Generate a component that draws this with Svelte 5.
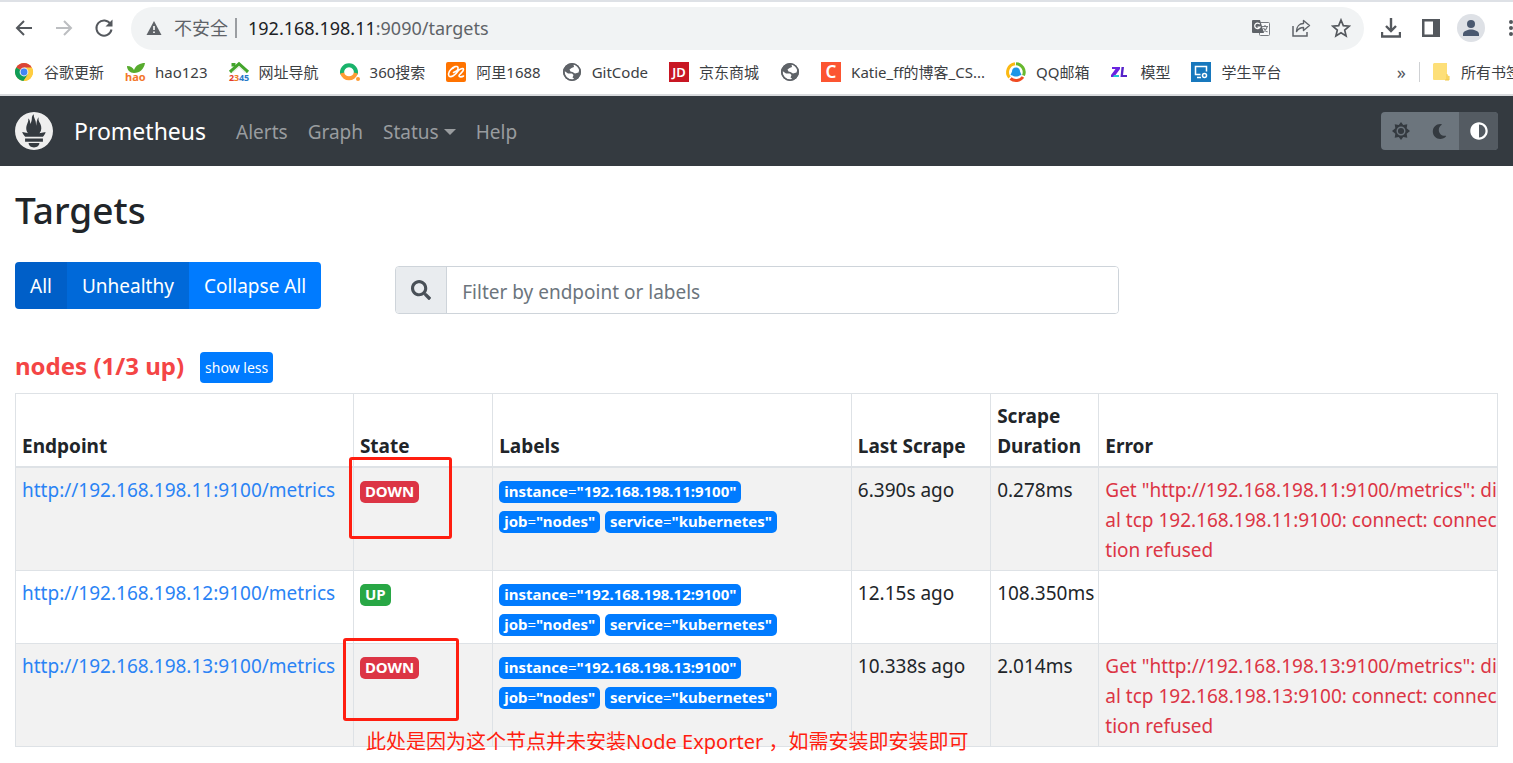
<script>
  const bookmarks = [
    { icon: 'chrome', text: '谷歌更新' },
    { icon: 'hao', text: 'hao123' },
    { icon: 'house', text: '网址导航' },
    { icon: 'ring', text: '360搜索' },
    { icon: 'ali', text: '阿里1688' },
    { icon: 'globe', text: 'GitCode' },
    { icon: 'jd', text: '京东商城' },
    { icon: 'globe', text: '' },
    { icon: 'csdn', text: 'Katie_ff的博客_CS...' },
    { icon: 'qq', text: 'QQ邮箱' },
    { icon: 'zl', text: '模型' },
    { icon: 'screen', text: '学生平台' }
  ];

  const targets = [
    { host: '192.168.198.11:9100', state: 'DOWN', last: '6.390s ago', duration: '0.278ms' },
    { host: '192.168.198.12:9100', state: 'UP', last: '12.15s ago', duration: '108.350ms' },
    { host: '192.168.198.13:9100', state: 'DOWN', last: '10.338s ago', duration: '2.014ms' }
  ].map((t) => ({
    ...t,
    url: `http://${t.host}/metrics`,
    labels: [['instance', t.host], ['job', 'nodes'], ['service', 'kubernetes']],
    error: t.state === 'DOWN' ? `Get "http://${t.host}/metrics": dial tcp ${t.host}: connect: connection refused` : ''
  }));

  let filter = $state('');
</script>

{#snippet favicon(name)}
  <svg class="fav" viewBox="0 0 20 20" aria-hidden="true">
    {#if name === 'chrome'}
      <circle cx="10" cy="10" r="9" fill="#fbc02d" />
      <path d="M10 10 2.2 5.5A9 9 0 0 1 17.8 5.5z" fill="#db4437" />
      <path d="M10 10 2.2 5.5A9 9 0 0 0 9.5 19L14 12z" fill="#0f9d58" />
      <path d="M17.8 5.5H10v5l4 2L9.5 19A9 9 0 0 0 17.8 5.5z" fill="#ffcd40" />
      <circle cx="10" cy="10" r="4.4" fill="#f1f1f1" />
      <circle cx="10" cy="10" r="3.4" fill="#4285f4" />
    {:else if name === 'hao'}
      <path d="M9 11C5 11 2 8 2 4c4 0 6 2 7 4 2-5 6-7 11-7-1 6-5 10-11 10z" fill="#57ab2e" />
      <text x="0" y="19" font-size="11" font-weight="700" fill="#f3772c">hao</text>
    {:else if name === 'house'}
      <path d="M2.500 1h4v3.500h-4z" fill="#43a52c" />
      <path d="M1 10l9-8 9 8" fill="none" stroke="#43a52c" stroke-width="3.200" />
      <path d="M3.500 10.500l6.500-6 6.500 6" fill="none" stroke="#e3eedd" stroke-width="1.200" />
      <g font-size="9" font-weight="700"><text x="0" y="19" fill="#e23b2e">2</text><text x="5" y="19" fill="#ef7d24">3</text><text x="10" y="19" fill="#2779c9">4</text><text x="15" y="19" fill="#2779c9">5</text></g>
    {:else if name === 'ring'}
      <path d="M2.2 12A7 7 0 1 1 15.8 12" fill="none" stroke="#19b36b" stroke-width="4" />
      <path d="M2.2 11A7 7 0 0 0 15.8 11" fill="none" stroke="#ff9b33" stroke-width="4" />
      <circle cx="18" cy="17" r="2" fill="#ff9b33" />
    {:else if name === 'ali'}
      <rect width="20" height="20" rx="2" fill="#ff7300" />
      <path d="M5 7.500C7 4.500 11.500 3.500 12 5.500c.5 2-2 4-4.500 5M7.500 6C4 7 1.500 11.500 3 14c2 2 6.500-1 9-5 1.500-2 5.500-3.500 5.500-1.500 0 2.500-5 5-4.500 6.500.4 1.300 3 1 4.500 0" fill="none" stroke="#fff" stroke-width="1.600" stroke-linecap="round" />
    {:else if name === 'globe'}
      <circle cx="10" cy="10" r="9" fill="#5f6368" />
      <path d="M11.500 2.500c3 .3 5 2.200 6 4.500l-1 3.500-3.500 1-2.500-1.500-2-.5-1-2 2-1.500 2.500-1zM2.500 9l3.500 2.500h4l1.500 1.500-1 2.500 1.500 1-1 1c-5 .5-8.500-3.500-8.500-8.500z" fill="#fff" />
      <circle cx="10" cy="10" r="8.200" fill="none" stroke="#5f6368" stroke-width="1.600" />
    {:else if name === 'jd'}
      <rect width="20" height="20" fill="#c81623" />
      <text x="10" y="15" font-size="13" font-weight="600" text-anchor="middle" fill="#fff">JD</text>
    {:else if name === 'csdn'}
      <rect width="20" height="20" fill="#fc5531" />
      <text x="10" y="16" font-size="17" font-weight="600" text-anchor="middle" fill="#fff">C</text>
    {:else if name === 'qq'}
      <path d="M3.500 15.500A8.500 8.500 0 0 1 9 1.700" fill="none" stroke="#fbb913" stroke-width="3" />
      <path d="M10 1.700A8.500 8.500 0 0 1 17.500 13.500" fill="none" stroke="#68b82e" stroke-width="3" />
      <path d="M17 15A8.500 8.500 0 0 1 4.500 16.500" fill="none" stroke="#f04b23" stroke-width="3" />
      <path d="M10 5.500c2.800 0 4 1.800 4 4l1.500 3.500-2 .5c-1 1.300-6 1.300-7 0l-2-.5L6 9.500c0-2.200 1.200-4 4-4z" fill="#1e96e8" />
    {:else if name === 'zl'}
      <path d="M2 5h8v2l-4.500 6H9v2H1v-2l4.500-6H2z" fill="#6a24e0" /><path d="M4 13h5v2H3z" fill="#24c5d3" />
      <path d="M11.500 5H14l-1 8h4v2h-6.500z" fill="#5623c9" />
    {:else}
      <rect width="20" height="20" fill="#1878bd" />
      <path d="M9.500 12.500H4.500v-8h11v5M6 15.500h4" fill="none" stroke="#fff" stroke-width="1.500" />
      <circle cx="13.500" cy="13.500" r="2" fill="none" stroke="#fff" stroke-width="1.500" />
    {/if}
  </svg>
{/snippet}

<div class="screen">
  <header class="browser">
    <div class="toolbar">
      <button class="tool" aria-label="Back"><svg viewBox="0 0 20 20"><path d="M18 10H3M10 3l-7 7 7 7" fill="none" stroke="#54585d" stroke-width="2" /></svg></button>
      <button class="tool" aria-label="Forward"><svg viewBox="0 0 20 20"><path d="M2 10h15M10 3l7 7-7 7" fill="none" stroke="#bcbec1" stroke-width="2" /></svg></button>
      <button class="tool" aria-label="Reload"><svg viewBox="0 0 20 20"><path d="M16.500 6A7.600 7.600 0 1 0 17.500 11.500" fill="none" stroke="#54585d" stroke-width="2" /><path d="M18.500 1.500v7h-7z" fill="#54585d" /></svg></button>
      <div class="address">
        <svg class="warn" viewBox="0 0 16 16"><path d="M8 1l7.500 14H.5z" fill="#5f6368" /><path d="M7.200 6h1.600v4H7.200zM7.200 11.500h1.600v1.600H7.200z" fill="#fff" /></svg>
        <span class="insecure">不安全</span>
        <span class="url">192.168.198.11<span>:9090/targets</span></span>
        <button class="tool" aria-label="Translate"><svg viewBox="0 0 20 20"><rect x="8.500" y="4.500" width="10" height="13" rx="1" fill="#f8f9fa" stroke="#777b80" /><path d="M2 2h7l4 13H2a1 1 0 0 1-1-1V3a1 1 0 0 1 1-1z" fill="#5f6368" /><path d="M8.800 6.200a2.800 2.800 0 1 0 .2 3H6.500" fill="none" stroke="#fff" stroke-width="1.300" /><path d="M11 8.500h6M14 7v1.500M16 8.500c0 2-2 4-4 5M12.500 10c1 2 2 3 4 4" fill="none" stroke="#777b80" stroke-width="1.200" /></svg></button>
        <button class="tool" aria-label="Share"><svg viewBox="0 0 20 20"><path d="M2 8v10h14v-4" fill="none" stroke="#5f6368" stroke-width="1.500" /><path d="M12.500 2.500l6 5-6 5v-3c-3 0-5 1-7 4 0-5 3-8 7-8z" fill="none" stroke="#5f6368" stroke-width="1.400" stroke-linejoin="round" /></svg></button>
        <button class="tool" aria-label="Bookmark"><svg viewBox="0 0 20 20"><path d="M10 2l2.300 5.600 6 .5-4.600 4 1.400 5.900-5.100-3.200L4.900 18l1.400-5.900-4.600-4 6-.5z" fill="none" stroke="#54585d" stroke-width="1.700" /></svg></button>
      </div>
      <div class="actions">
        <button class="tool" aria-label="Downloads"><svg viewBox="0 0 20 20"><path d="M10 0v12M5 8l5 5 5-5M1 14v4.500h18V14" fill="none" stroke="#54585d" stroke-width="2.400" /></svg></button>
        <button class="tool" aria-label="Side panel"><svg viewBox="0 0 20 20"><path d="M1 1h18v18H1zM3.500 3.500v13H12v-13z" fill="#54585d" fill-rule="evenodd" /></svg></button>
        <button class="tool avatar" aria-label="Profile"><svg viewBox="0 0 28 28"><circle cx="14" cy="14" r="14" fill="#dee1e6" /><circle cx="14" cy="10" r="4" fill="#4a5970" /><path d="M6 22v-2c0-3 5-4.500 8-4.500s8 1.500 8 4.500v2z" fill="#4a5970" /></svg></button>
        <button class="tool" aria-label="Menu"><svg viewBox="0 0 20 20"><g fill="#54585d"><circle cx="10" cy="4" r="2" /><circle cx="10" cy="10" r="2" /><circle cx="10" cy="16" r="2" /></g></svg></button>
      </div>
    </div>
    <nav class="bookmarks" aria-label="Bookmarks">
      {#each bookmarks as b}
        <a class="bookmark" href="#bookmark" aria-label={b.text || 'Website'}>{@render favicon(b.icon)}{#if b.text}<span>{b.text}</span>{/if}</a>
      {/each}
      <div class="all">
        <button class="more" aria-label="More bookmarks">»</button>
        <a class="bookmark folder" href="#all"><svg class="fav" viewBox="0 0 20 20"><path d="M3 1h13v12l2 1v4H3a1 1 0 0 1-1-1V2z" fill="#fddf78" /><path d="M16 12v6M14 18h4v-4" fill="none" stroke="#f1c94b" /></svg><span>所有书签</span></a>
      </div>
    </nav>
  </header>

  <nav class="navbar">
    <a class="brand" href="#home">
      <svg viewBox="0 0 24 24" aria-hidden="true"><path fill="#eee" d="M12 0C5.373 0 0 5.372 0 12c0 6.627 5.373 12 12 12s12-5.373 12-12c0-6.628-5.373-12-12-12zm0 22.46c-1.885 0-3.414-1.26-3.414-2.814h6.828c0 1.553-1.528 2.813-3.414 2.813zm5.64-3.745H6.36v-2.046h11.28v2.046zm-.04-3.098H6.391c-.037-.043-.075-.086-.111-.13-1.155-1.401-1.427-2.133-1.69-2.879-.005-.025 1.4.287 2.395.511 0 0 .513.119 1.262.255-.72-.843-1.147-1.915-1.147-3.01 0-2.406 1.845-4.508 1.18-6.207.648.053 1.34 1.367 1.387 3.422.689-.951.977-2.69.977-3.755 0-1.103.727-2.385 1.454-2.429-.648 1.069.168 1.984.894 4.256.272.854.237 2.29.447 3.201.07-1.892.395-4.652 1.595-5.605-.529 1.2.079 2.702.494 3.424.671 1.164 1.078 2.047 1.078 3.716a4.642 4.642 0 01-1.11 2.996c.792-.149 1.34-.283 1.34-.283l2.573-.502s-.374 1.538-1.81 3.019z" /></svg>
      <span>Prometheus</span>
    </a>
    <a class="link" href="#alerts">Alerts</a>
    <a class="link" href="#graph">Graph</a>
    <a class="link dropdown" href="#status">Status</a>
    <a class="link" href="#help">Help</a>
    <div class="themes">
      <button aria-label="Light theme"><svg viewBox="0 0 20 20"><path d="M10 0l2.500 3.200 4.500-.7-.7 4.500L20 10l-3.700 3 .7 4.500-4.500-.7L10 20l-2.500-3.200-4.500.7.700-4.500L0 10l3.700-3L3 2.500l4.500.7z" fill="#343a40" /><circle cx="10" cy="10" r="4.200" fill="#343a40" stroke="#6c757d" stroke-width="1.600" /></svg></button>
      <button aria-label="Dark theme"><svg viewBox="0 0 512 512"><path fill="#343a40" d="M283.211 512c78.962 0 151.079-35.925 198.857-94.792 7.068-8.708-.639-21.43-11.562-19.35-124.203 23.654-238.262-71.576-238.262-196.954 0-72.222 38.662-138.635 101.498-174.394 9.686-5.512 7.250-20.197-3.756-22.230A258.156 258.156 0 0 0 283.211 0c-141.309 0-256 114.511-256 256 0 141.309 114.511 256 256 256z" /></svg></button>
      <button class="on" aria-label="Browser theme"><svg viewBox="0 0 512 512"><path fill="#fff" d="M8 256c0 136.966 111.033 248 248 248s248-111.034 248-248S392.966 8 256 8 8 119.033 8 256zm248 184V72c101.705 0 184 82.311 184 184 0 101.705-82.311 184-184 184z" /></svg></button>
    </div>
  </nav>

  <main>
    <h2>Targets</h2>
    <div class="controls">
      <div class="group">
        <button class="all-btn">All</button>
        <button class="unhealthy">Unhealthy</button>
        <button>Collapse All</button>
      </div>
      <div class="search">
        <label for="filter" aria-label="Filter"><svg viewBox="0 0 512 512"><path fill="#495057" d="M505 442.700L405.300 343c-4.500-4.500-10.600-7-17-7H372c27.600-35.300 44-79.700 44-128C416 93.100 322.900 0 208 0S0 93.100 0 208s93.100 208 208 208c48.300 0 92.700-16.400 128-44v16.300c0 6.400 2.500 12.500 7 17l99.700 99.700c9.400 9.400 24.600 9.400 33.900 0l28.300-28.300c9.400-9.400 9.400-24.600.1-34zM208 336c-70.700 0-128-57.200-128-128 0-70.700 57.200-128 128-128 70.700 0 128 57.200 128 128 0 70.700-57.200 128-128 128z" /></svg></label>
        <input id="filter" type="text" placeholder="Filter by endpoint or labels" bind:value={filter} />
      </div>
    </div>

    <div class="pool">
      <h3>nodes (1/3 up)</h3>
      <button>show less</button>
    </div>

    <div class="table-wrap">
      <table>
        <colgroup><col class="c-endpoint" /><col class="c-state" /><col class="c-labels" /><col class="c-last" /><col class="c-duration" /><col /></colgroup>
        <thead>
          <tr><th>Endpoint</th><th>State</th><th>Labels</th><th>Last Scrape</th><th>Scrape Duration</th><th>Error</th></tr>
        </thead>
        <tbody>
          {#each targets as t}
            <tr>
              <td><a href={t.url}>{t.url}</a></td>
              <td><span class="badge" class:up={t.state === 'UP'} class:down={t.state === 'DOWN'}>{t.state}</span></td>
              <td>{#each t.labels as [key, value]}<span class="badge">{key}<span class="eq">=</span>"{value}"</span>{' '}{/each}</td>
              <td>{t.last}</td>
              <td>{t.duration}</td>
              <td class="error">{t.error}</td>
            </tr>
          {/each}
        </tbody>
      </table>
      <div class="mark first"></div>
      <div class="mark third"></div>
      <p class="note">此处是因为这个节点并未安装Node Exporter ，如需安装即安装即可</p>
    </div>
  </main>
</div>

<style>
  :global(body) { margin: 0; background: #fff; }
  .screen { font-family: 'Noto Sans', 'Noto Sans CJK SC', sans-serif; font-size: 19px; line-height: 30px; color: #212529; overflow: hidden; }
  .screen * { box-sizing: border-box; }
  button { font: inherit; border: 0; padding: 0; margin: 0; background: none; cursor: pointer; color: inherit; }
  a { text-decoration: none; }
  svg { display: block; flex: none; }

  .browser { border-top: 2px solid #dee1e6; border-bottom: 2px solid #d9dbde; overflow: hidden; }
  .toolbar { display: flex; align-items: center; height: 52px; padding-left: 14px; gap: 20px; }
  .tool { flex: none; }
  .tool svg { width: 20px; height: 20px; }
  .address { flex: 1; display: flex; align-items: center; gap: 20px; height: 43px; margin-left: -3px; padding: 0 13px 0 15px; border-radius: 22px; background: #f1f3f4; font-size: 18px; line-height: 24px; }
  .warn { width: 16px; height: 16px; }
  .insecure { color: #5f6368; margin-left: -8px; padding-right: 7px; border-right: 2px solid #9a9da1; line-height: 20px; }
  .url { flex: 1; margin-left: -9px; color: #202124; }
  .url span { color: #5f6368; }
  .actions { display: flex; align-items: center; gap: 20px; margin: 0 -8px 0 -3px; }
  .avatar { margin: 0 -4px; }
  .avatar svg { width: 28px; height: 28px; }
  .bookmarks { display: flex; align-items: center; gap: 21px; height: 40px; padding: 0 0 4px 14px; font-size: 15px; line-height: 24px; white-space: nowrap; }
  .bookmark { display: flex; align-items: center; gap: 10px; color: #3c4043; flex: none; }
  .fav { width: 20px; height: 20px; overflow: visible; }
  .all { display: flex; align-items: center; gap: 13px; margin: 0 -8px 0 auto; }
  .more { font-size: 18px; color: #54585d; }
  .folder { border-left: 1px solid #cfd1d4; padding-left: 11px; line-height: 20px; }

  .navbar { display: flex; align-items: center; height: 70px; padding: 0 15px; gap: 20px; background: #343a40; }
  .brand { display: flex; align-items: center; gap: 21px; margin-right: 10px; color: #fff; font-size: 23px; }
  .brand svg { width: 38px; height: 38px; }
  .link { color: #999c9f; padding-top: 2px; }
  .dropdown { display: flex; align-items: center; gap: 5px; }
  .dropdown::after { content: ''; border: 6px solid transparent; border-top-color: currentColor; border-bottom: 0; }
  .themes { display: flex; margin-left: auto; border-radius: 4px; overflow: hidden; background: #6c757d; }
  .themes button { display: grid; place-items: center; width: 39px; height: 38px; }
  .themes svg { width: 18px; height: 18px; }
  .themes button:nth-child(2) svg { width: 15px; height: 15px; }
  .themes .on { background: #545b62; }

  main { padding: 20px 15px; }
  h2 { margin: 0; font-size: 37px; line-height: 48px; font-weight: 500; }
  .controls { display: grid; grid-template-columns: 1fr 2fr 1fr; margin: 28px -15px 0; }
  .group { display: flex; align-self: start; justify-self: start; margin-left: 15px; border-radius: 4px; overflow: hidden; color: #fff; }
  .group button { height: 47px; padding: 0 15px; background: #007bff; white-space: nowrap; }
  .group .all-btn { background: #005fc8; }
  .group .unhealthy { background: #0069d9; }
  .search { display: flex; height: 48px; margin: 4px 16px 0 17px; border: 1px solid #ced4da; border-radius: 4px; overflow: hidden; }
  .search label { display: grid; place-items: center; width: 51px; background: #e9ecef; border-right: 1px solid #ced4da; }
  .search svg { width: 20px; height: 20px; }
  .search input { flex: 1; min-width: 0; border: 0; outline: 0; padding: 4px 15px 0; font: inherit; color: #495057; background: #fff; }
  .search input::placeholder { color: #6c757d; opacity: 1; }

  .pool { display: flex; align-items: center; gap: 16px; margin-top: 35px; }
  h3 { margin: 0; font-size: 24px; line-height: 34px; font-weight: 700; color: #f44545; }
  .pool button { height: 31px; padding: 0 5px; border-radius: 4px; background: #007bff; color: #fff; font-size: 14px; margin-top: 3px; }

  .table-wrap { position: relative; margin-top: 10px; }
  table { width: 100%; table-layout: fixed; border-collapse: collapse; }
  .c-endpoint { width: 22.8%; }
  .c-state { width: 9.4%; }
  .c-labels { width: 24.2%; }
  .c-last { width: 9.4%; }
  .c-duration { width: 7.3%; }
  th, td { border: 1px solid #dee2e6; padding: 7px 6px 5px; text-align: left; vertical-align: top; }
  th { vertical-align: bottom; border-bottom-width: 2px; font-weight: 700; }
  tbody tr:nth-child(odd) { background: #f2f2f2; }
  td a { color: #2a83f5; }
  .error { color: #dc3545; word-break: break-all; padding-right: 0; }
  .badge { display: inline-block; padding: 0 5px 1px; border-radius: 5px; background: #007bff; color: #fff; font-size: 15px; line-height: 21px; font-weight: 700; white-space: nowrap; vertical-align: middle; }
  .eq { font-weight: 400; }
  .badge.up { background: #28a745; }
  .badge.down { background: #dc3545; }
  .mark { position: absolute; border: 3px solid #ff1e10; border-radius: 3px; pointer-events: none; }
  .first { left: 334px; top: 64px; width: 103px; height: 82px; }
  .third { left: 328px; top: 245px; width: 116px; height: 83px; }
  .note { position: absolute; left: 351px; top: 334px; margin: 0; color: #ff1e10; font-size: 20px; white-space: nowrap; }
</style>
